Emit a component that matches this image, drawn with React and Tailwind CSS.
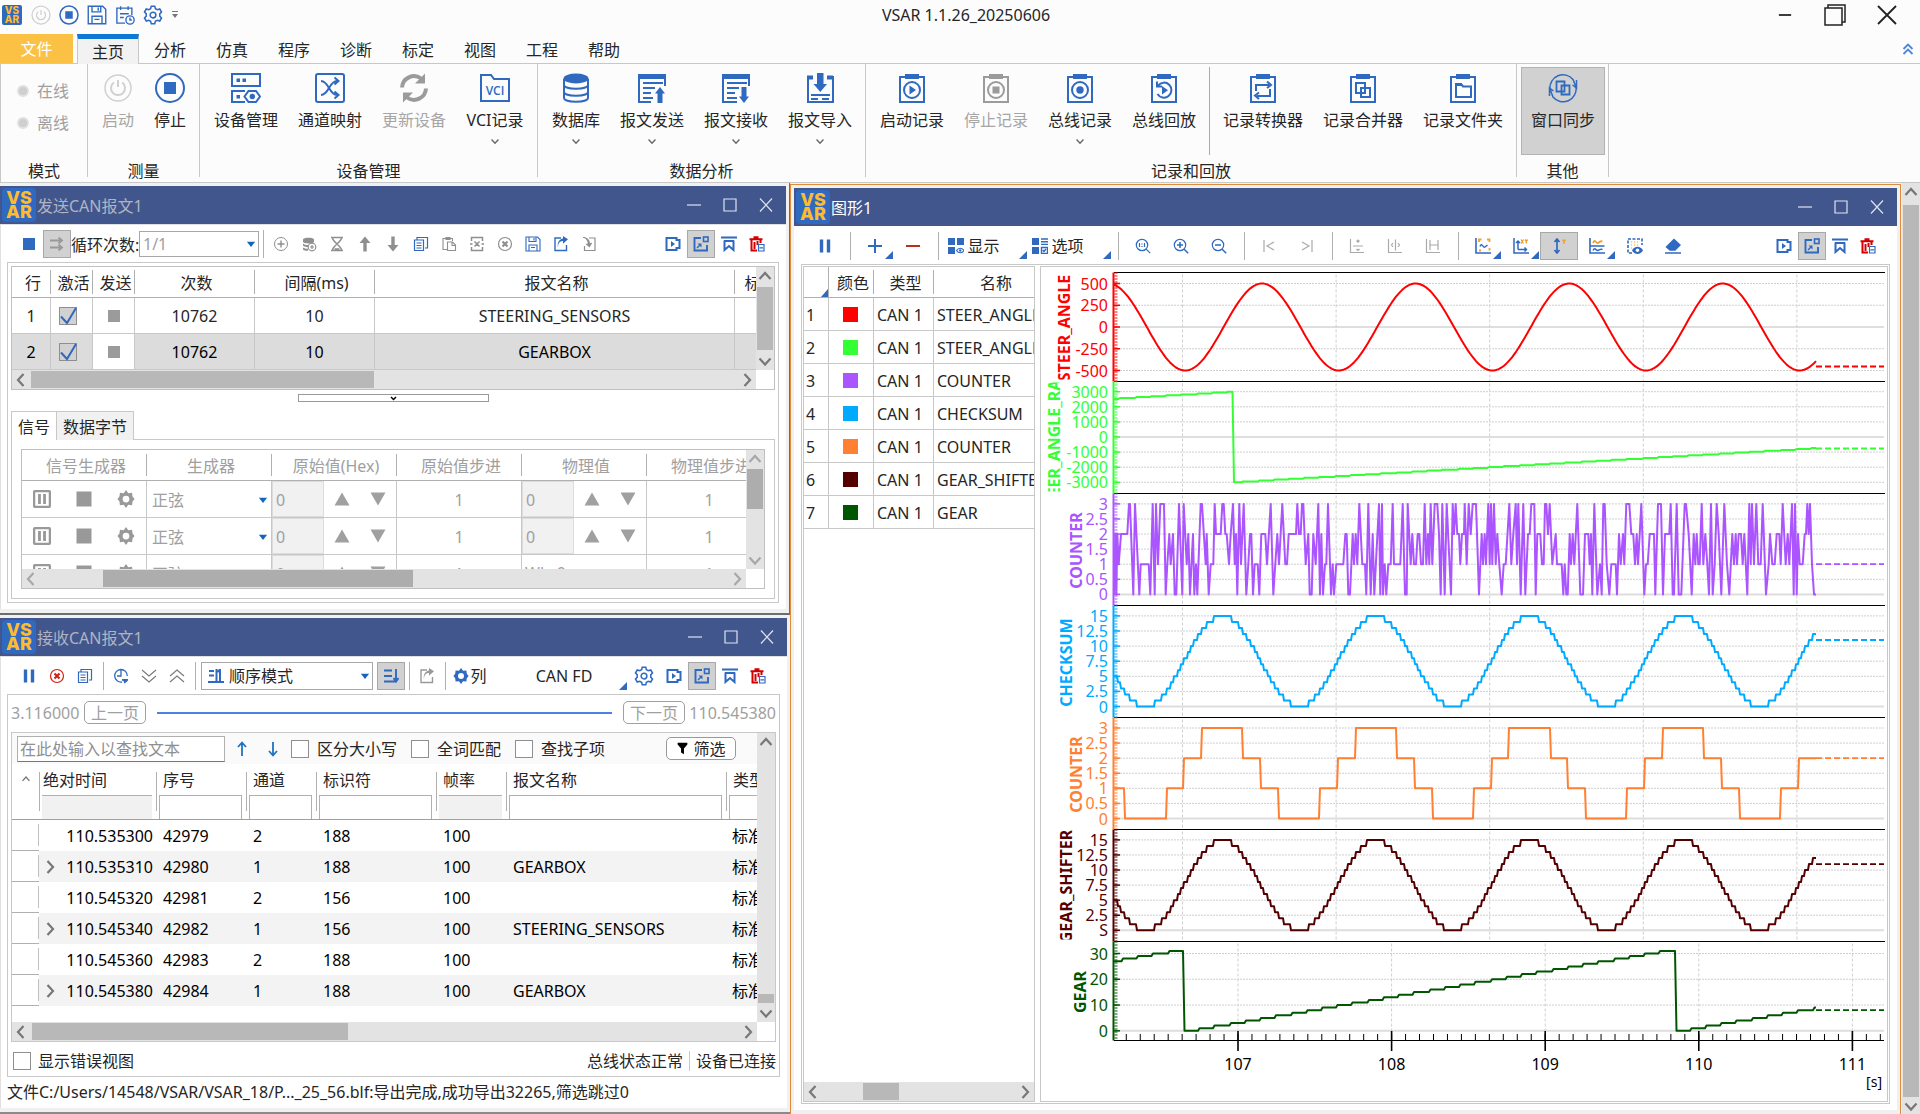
import { useState } from 'react';
import clsx from 'clsx';

/* ---------- icons ---------- */

function Icon({ name, size = 16, className }) {
  return (
    <svg
      viewBox="0 0 16 16"
      width={size}
      height={size}
      fill="none"
      stroke="currentColor"
      strokeWidth="1.2"
      className={clsx('shrink-0', className)}
      aria-hidden="true"
    >
      {ICONS[name]}
    </svg>
  );
}

const GEAR_PATH =
  'M6.6 1h2.8l.5 2 1.5.8 2-.6 1.4 2.4L13.400 7.100v1.800l1.400 1.500-1.400 2.400-2-.6-1.500.8-.5 2H6.600l-.5-2-1.500-.8-2 .6L1.200 10.400 2.600 8.900V7.100L1.200 5.600l1.400-2.400 2 .6 1.500-.8z';

const ICONS = {
  stop: <rect x="2" y="2" width="12" height="12" fill="currentColor" stroke="none" />,
  pause: <path d="M4.500 1.500v13M11.500 1.500v13" strokeWidth="3.400" />,
  power: (
    <g>
      <circle cx="8" cy="8" r="7.200" strokeWidth="1" />
      <path d="M8 4v4M5.600 5.400a3.600 3.600 0 1 0 4.800 0" strokeWidth="1" />
    </g>
  ),
  stopCircle: (
    <g>
      <circle cx="8" cy="8" r="7.200" />
      <rect x="5" y="5" width="6" height="6" fill="currentColor" stroke="none" />
    </g>
  ),
  save: (
    <g>
      <path d="M1 1h11.500L15 3.500V15H1zM4 1v4.500h7V1M4 15V9h8v6M9 2v2.500M6 11.500h4" strokeWidth="1.100" />
    </g>
  ),
  schedule: (
    <g strokeWidth="1.100">
      <path d="M8 14.500H1.500v-12h12V8M4.500 1v3M10.500 1v3M4 7h7M4 10h3" />
      <circle cx="12" cy="12" r="3.300" />
      <path d="M12 10v2h1.500" />
    </g>
  ),
  gear: (
    <g>
      <path d={GEAR_PATH} />
      <circle cx="8" cy="8" r="2.300" />
    </g>
  ),
  gearBold: (
    <path d="M8 0l2 2.800 3.400-.3.400 3.300L15.600 8l-1.800 2.200-.4 3.300-3.400-.3L8 16l-2-2.800-3.400.3-.4-3.300L.4 8l1.800-2.200.4-3.300 3.400.3zM8 5a3 3 0 1 0 0 6 3 3 0 1 0 0-6z" fill="currentColor" stroke="none" fillRule="evenodd" />
  ),
  arrows: <path d="M1 4.500h12M9.500 1.500l3.500 3-3.500 3M1 11.500h12M9.500 8.500l3.500 3-3.500 3" strokeWidth="1.800" />,
  plusCircle: (
    <g>
      <circle cx="8" cy="8" r="6.500" strokeWidth="1" />
      <path d="M8 4.500v7M4.500 8h7" strokeWidth="1.400" />
    </g>
  ),
  xCircle: (
    <g>
      <circle cx="8" cy="8" r="6.500" strokeWidth="1.200" />
      <path d="M5.500 5.500l5 5M10.500 5.500l-5 5" strokeWidth="2.200" />
    </g>
  ),
  dbAdd: (
    <g>
      <path d="M2 3.500C2 1.200 13 1.200 13 3.500v2.200C13 8 2 8 2 5.700zM2 7.500c1 1 3 1.500 5 1.500v2c-2 0-5-.6-5-1.500zM2 11.500c1 1 3 1.300 5 1.300v1.900c-2 0-5-.5-5-1.500z" fill="currentColor" stroke="none" />
      <circle cx="11" cy="11" r="3.800" />
      <path d="M11 9v4M9 11h4" />
    </g>
  ),
  hourglass: <path d="M2 1.500h12M2 14.500h12M3.500 2c0 3.500 9 8.500 9 12M12.500 2c0 3.500-9 8.500-9 12M5.500 13h5" strokeWidth="1.500" />,
  up: <path d="M8 .5L13.500 7H9.700v8.500H6.300V7H2.500z" fill="currentColor" stroke="none" />,
  down: <path d="M8 15.500L2.500 9h3.800V.5h3.400V9h3.800z" fill="currentColor" stroke="none" />,
  copy: <path d="M4 4V1.500h10.500V12H12M1.500 4h9v10.500h-9zM3.500 7h5M3.500 9.500h5M3.500 12h5" />,
  paste: <path d="M6 13.500H2v-11h9.500V5M5 1.500h4v2H5zM6.500 6h5l3 3v5.500h-8zM11 6v3.500h3.500" strokeWidth="1.100" />,
  cutX: <path d="M2.500 5V1.500h11V5M2.500 11v3.500h11V11M1 8h2.500M12.500 8H15M5.500 5.500l5 5M10.500 5.500l-5 5" strokeWidth="1.500" />,
  share: (
    <g>
      <path d="M8 2H2v12.500h11.500V9" strokeWidth="1.400" />
      <path d="M5 11.500C5 7 7 5 10 5V7.800l5-4.500L10 0v2.500C6.500 3 4 6.500 5 11.500z" fill="currentColor" stroke="none" />
    </g>
  ),
  importIn: (
    <g>
      <path d="M8 2h6v12.500H3.500V10" />
      <path d="M2 1c4 0 6.500 2.500 7 6l2.300-.3L8.500 11.500 4.500 8l2.300-.5C6.500 4.500 5 2 2 2z" fill="currentColor" stroke="none" />
    </g>
  ),
  boxPlay: (
    <g>
      <path d="M1.500 2h10v2h3v8h-3v2h-10z" strokeWidth="2" />
      <path d="M6 5v6l4-3z" fill="currentColor" stroke="none" />
    </g>
  ),
  popOut: (
    <g strokeWidth="1.900">
      <path d="M8 2H1.500v12.500H14V9" />
      <rect x="10.500" y="1" width="4.500" height="4.500" strokeWidth="1.600" />
      <path d="M4.500 7.500h4v4z" fill="currentColor" stroke="none" />
      <path d="M4 12l3.500-3.500" strokeWidth="1.500" />
    </g>
  ),
  bookmark: (
    <g strokeWidth="2">
      <path d="M0 1.500h16M3.500 4.500v9.500L8 10l4.500 4V4.500M3 5h10" />
    </g>
  ),
  trash: (
    <g>
      <path d="M.5 3.200h13M4.500 1.300h5M2.500 3v11.500H8M5.500 6v7M8.500 5v4M11.500 4v3" strokeWidth="2" />
      <path d="M9.500 8.500h5.500v6.500H9.500zM10.500 11.800h3.500" stroke="#2f69c0" fill="#fff" />
    </g>
  ),
  timer: (
    <g>
      <path d="M9 14A6.300 6.300 0 1 1 14.300 8M8 1.700V8H4" strokeWidth="1.300" />
      <path d="M9 11h6v1.500l-2 2-2 1v-2l-2-1z" fill="currentColor" stroke="none" />
    </g>
  ),
  dblDown: <path d="M1 2l7 6 7-6M1 8l7 6 7-6" strokeWidth="1.100" />,
  dblUp: <path d="M1 8l7-6 7 6M1 14l7-6 7 6" strokeWidth="1.100" />,
  rows: <path d="M1 2.500h8M1 8h8M1 13.500h12M13 1v11M10.500 10l2.500 3.500 2.500-3.500" strokeWidth="1.900" />,
  order: <path d="M1 3h5M1 7.500h5M0 14h16M8.500 1v12M12 1v12M9.500 4L12 1.500" strokeWidth="2" />,
  plus: <path d="M8 1v14M1 8h14" strokeWidth="2" />,
  minus: <path d="M1 8h14" strokeWidth="2" />,
  panelsEye: (
    <g fill="currentColor" stroke="none">
      <path d="M0 0h7v7H0zM9 0h7v7H9zM0 9h7v7H0z" />
      <path d="M8.500 12.500c2-3 5.500-3 7.500 0-2 3-5.500 3-7.500 0z" fill="none" stroke="currentColor" />
      <circle cx="12.200" cy="12.500" r="1.200" />
    </g>
  ),
  panelsCheck: (
    <g>
      <path d="M0 0h7v7H0zM0 9h7v7H0z" fill="currentColor" stroke="none" />
      <path d="M9 1h7M9 3.700h7M9 6.400h7M9.500 9.500h6V15.500h-6zM10.800 12l1.200 1.500 2-2.500" strokeWidth="1.400" />
    </g>
  ),
  zoomOne: (
    <g>
      <circle cx="7" cy="7" r="5.700" />
      <path d="M11.200 11.200l4 4M4.500 5v4M9.500 5v4M7 5.500v1M7 8v1" />
    </g>
  ),
  zoomIn: (
    <g>
      <circle cx="7" cy="7" r="5.700" />
      <path d="M11.200 11.200l4 4M4 7h6M7 4v6" strokeWidth="1.500" />
    </g>
  ),
  zoomOut: (
    <g>
      <circle cx="7" cy="7" r="5.700" />
      <path d="M11.200 11.200l4 4M4 7h6" strokeWidth="1.500" />
    </g>
  ),
  first: <path d="M3 2v12M13 4L6 8l7 4" />,
  last: <path d="M13 2v12M3 4l7 4-7 4" />,
  splitV: <path d="M1.500 1v13.500H15M4 8h10M9 2v3M7.500 3.500L9 2l1.500 1.500M9 11v2M7.500 11L9 12.500 10.500 11" />,
  splitH: <path d="M1.500 1v13.500H15M8.500 1.500v11M6 5L4.500 7 6 9M11 5l1.500 2L11 9" />,
  spanH: <path d="M1.500 1v13.500H15M5 2v10M13 2v10M5 7h8" />,
  wave: (
    <g>
      <path d="M1 0v15h15" strokeWidth="1.600" />
      <path d="M4 4V1.500h2.500M12 1.500h2.500V4M14.500 10v2.500M4 12.500h2" stroke="#f0a030" strokeWidth="1.800" />
      <path d="M5 8.500c2-5 3 2 5 .5l2.500-2" strokeWidth="1.500" />
    </g>
  ),
  axesXY: (
    <g>
      <path d="M1 0v15h15M5 11.500V3M3 5l2-2 2 2M5 11.500h8M11.500 9.500l2 2-2 2" strokeWidth="1.500" />
      <path d="M8 1.500l2.500 4M10.500 1.500l-2.500 4M12 1.500l1.300 2 1.300-2M13.300 3.500v2" stroke="#f0a030" strokeWidth="1.400" />
    </g>
  ),
  axisY: (
    <g>
      <path d="M6 1v14M3.500 4L6 1 8.500 4M3.500 12L6 15l2.500-3" strokeWidth="1.700" />
      <path d="M11.500 1.500l1.500 2 1.500-2M13 3.500v2.500" stroke="#f0a030" strokeWidth="1.500" />
    </g>
  ),
  waves: (
    <g>
      <path d="M1 0v15h15M1 8h14.500" strokeWidth="1.600" />
      <path d="M4 5c2-5 3 1 5 0s2-2.500 4.500-1.500" stroke="#f0a030" strokeWidth="1.800" />
      <path d="M4 12.500c2-4 3 .5 5 0s2-2 4.500-1" strokeWidth="1.500" />
    </g>
  ),
  gridEye: (
    <g>
      <path d="M5 15H1V1h14v6" strokeDasharray="3 1.500" strokeWidth="1.600" />
      <path d="M4 4h9M4 7h9M4 10h2" stroke="#f0a030" strokeDasharray="1.200 1.800" />
      <path d="M5 12.500c2.500-5 8.500-5 11 0-2.500 4.500-8.500 4.500-11 0z" fill="currentColor" stroke="none" />
      <circle cx="10.500" cy="12.200" r="1.700" fill="#fff" stroke="none" />
    </g>
  ),
  eraser: <path d="M9 1.500L15 7l-5 5H5L1.500 9zM0 15h16" fill="currentColor" strokeWidth="1.400" />,
  chevDown: <path d="M2.500 5.500L8 11.500l5.500-6" strokeWidth="2.200" />,
  chevUp: <path d="M2.500 11L8 5l5.500 6" strokeWidth="2.200" />,
  chevLeft: <path d="M10.500 2L5 8l5.500 6" strokeWidth="2.200" />,
  chevRight: <path d="M5.500 2L11 8l-5.500 6" strokeWidth="2.200" />,
  caret: <path d="M2.500 5h11L8 12z" fill="currentColor" stroke="none" />,
  triUp: <path d="M8 1.500l7.500 13H.5z" fill="currentColor" stroke="none" />,
  triDown: <path d="M8 14.500l7.500-13H.5z" fill="currentColor" stroke="none" />,
  cellPause: <path d="M1.500 0h13A1.500 1.500 0 0 1 16 1.500v13a1.500 1.500 0 0 1-1.500 1.500h-13A1.500 1.500 0 0 1 0 14.500v-13A1.500 1.500 0 0 1 1.500 0zM2 2v12h12V2zM4.500 3.500H7v9H4.500zM9 3.500h2.500v9H9z" fill="currentColor" stroke="none" fillRule="evenodd" />,
  arrowUpThin: <path d="M8 15V2M4 6l4-4.500L12 6" strokeWidth="1.800" />,
  arrowDownThin: <path d="M8 1v13M4 10l4 4.500 4-4.500" strokeWidth="1.800" />,
  funnel: <path d="M2 1h12v2L9.800 8v7L6.200 13V8L2 3z" fill="currentColor" stroke="none" />,
  winMin: <path d="M1 8h14" />,
  winMax: <path d="M2 2h12v12H2z" />,
  winClose: <path d="M2 1.500l12 13M14 1.500l-12 13" />,
};

/* 30x30 drawings used by the ribbon buttons */
const CLIP = (
  <g>
    <path d="M3 4h24v25H3z" strokeWidth="2" />
    <path d="M8 1h14v5H8z" fill="currentColor" stroke="none" />
  </g>
);

const RIBBON_ICONS = {
  power: (
    <g strokeWidth="1.500">
      <circle cx="15" cy="15" r="13" />
      <path d="M15 7v7M10.800 9.500a7 7 0 1 0 8.400 0" strokeWidth="2" />
    </g>
  ),
  stop: (
    <g>
      <circle cx="15" cy="15" r="14" strokeWidth="2" />
      <rect x="9" y="9" width="12" height="12" fill="currentColor" stroke="none" />
    </g>
  ),
  devices: (
    <g strokeWidth="2">
      <path d="M1 1h28v12H1zM14 29H1V18h13" />
      <path d="M5.500 5.500h3.500v3.500H5.500zM11.500 5.500h3.500v3.500h-3.500zM5.500 22h3.500v3.500H5.500z" fill="currentColor" stroke="none" />
      <path d="M17.500 18h7.500l4 5.500-4 5.500h-7.500l-4-5.500z" />
      <circle cx="21.300" cy="23.500" r="1.700" fill="currentColor" />
    </g>
  ),
  shuffle: (
    <g strokeWidth="2">
      <rect x="1" y="1" width="28" height="28" rx="2" />
      <path d="M6 8c8 0 8 14 16 14M6 22c8 0 8-14 16-14M19.500 4.500L23.500 8l-4 3.500M19.500 18.500l4 3.500-4 3.500" />
    </g>
  ),
  refresh: (
    <g strokeWidth="4">
      <path d="M3 14.500A12 12 0 0 1 22 5.500M27 15.500A12 12 0 0 1 8 24.500" />
      <path d="M26 .5v10H16zM4 29.500v-10h10z" fill="currentColor" stroke="none" />
    </g>
  ),
  vci: (
    <g strokeWidth="2">
      <path d="M1 28V2h10l3 4h15v22z" />
      <text x="15" y="22" textAnchor="middle" fontSize="12" fontWeight="600" fontFamily="Open Sans" fill="currentColor" stroke="none">VCI</text>
    </g>
  ),
  database: (
    <g>
      <ellipse cx="15" cy="5.500" rx="12.500" ry="5" fill="currentColor" stroke="none" />
      <path d="M3 6v19c0 5 24 5 24 0V6M3 12c0 5 24 5 24 0M3 19c0 5 24 5 24 0" strokeWidth="2" />
    </g>
  ),
  send: (
    <g strokeWidth="2">
      <path d="M14 29H2V2h26v11M6 10h20M6 15h12M6 20h8M6 25h10" />
      <path d="M2 1h26v5H2z" fill="currentColor" stroke="none" />
      <path d="M23 14l5 6.500h-2.500V30h-5v-9.500H18z" fill="currentColor" stroke="none" />
    </g>
  ),
  receive: (
    <g strokeWidth="2">
      <path d="M16 29H2V2h26v11M6 10h20M6 15h12M6 20h8M6 25h10" />
      <path d="M2 1h26v5H2z" fill="currentColor" stroke="none" />
      <path d="M23 30l-5-6.500h2.500V14h5v9.500H28z" fill="currentColor" stroke="none" />
    </g>
  ),
  importDoc: (
    <g strokeWidth="2">
      <path d="M8 4H3v25h25V4h-5M6 22h19M6 26h7M17 26h7" />
      <path d="M2 2.500h6v4H2zM22 2.500h6v4h-6z" fill="currentColor" stroke="none" />
      <path d="M12 0h6.500v11H22l-6.700 8L8.500 11H12z" fill="currentColor" stroke="none" />
    </g>
  ),
  recPlay: (
    <g>
      {CLIP}
      <circle cx="15" cy="17" r="8" strokeWidth="2" />
      <path d="M12.500 12.500v9l6.500-4.500z" fill="currentColor" stroke="none" />
    </g>
  ),
  recStop: (
    <g>
      {CLIP}
      <circle cx="15" cy="17" r="8" strokeWidth="2" />
      <path d="M11.500 13.500h7v7h-7z" fill="currentColor" stroke="none" />
    </g>
  ),
  recDot: (
    <g>
      {CLIP}
      <circle cx="15" cy="17" r="8" strokeWidth="2" />
      <circle cx="15" cy="17" r="3.700" fill="currentColor" stroke="none" />
    </g>
  ),
  replay: (
    <g>
      {CLIP}
      <path d="M9 12.500a7.500 7.500 0 1 1-.5 8.500M8 8.500v5h5" strokeWidth="2" />
      <path d="M13 13v8.500l6-4.200z" fill="currentColor" stroke="none" />
    </g>
  ),
  convert: (
    <g>
      {CLIP}
      <path d="M8 18v-6h13M22 16v7H9M19 8.500l4 3.500-4 3M11 26l-4-3.500 4-3" strokeWidth="2" />
    </g>
  ),
  merge: (
    <g>
      {CLIP}
      <path d="M8 10h9v10H8zM13 15h9v9h-9z" strokeWidth="2" />
    </g>
  ),
  folder: (
    <g>
      {CLIP}
      <path d="M8 24V11h5l2 2.500h8V24z" strokeWidth="2" />
      <path d="M7 10h6.500l2 3H7z" fill="currentColor" stroke="none" />
    </g>
  ),
  sync: (
    <g strokeWidth="2">
      <path d="M2 16A13 13 0 0 1 25 6.500L28 14M28 14A13 13 0 0 1 5 24L2 16M28.500 7v8l-4-3M1.500 23v-8l4 3" strokeWidth="1.500" />
      <path d="M8.500 8.500h8v10h-8zM13.500 12.500h8v9h-8z" strokeWidth="1.800" />
    </g>
  ),
};

function Logo({ small }) {
  return (
    <span
      className={clsx(
        'flex shrink-0 flex-col items-center justify-center bg-[#2f69c0] font-[Inter] font-extrabold text-[#fdbb2d]',
        small ? 'h-5 w-5 rounded-[2px] text-[10px] leading-[9px]' : 'h-[34px] w-[34px] rounded-[4px] text-[18px] leading-[14px]',
      )}
    >
      <span>VS</span>
      <span>AR</span>
    </span>
  );
}

/* ---------- ribbon ---------- */

const TABS = ['主页', '分析', '仿真', '程序', '诊断', '标定', '视图', '工程', '帮助'];

function RibbonButton({ icon, label, width = 'w-[84px]', menu, disabled, active }) {
  return (
    <button
      type="button"
      disabled={disabled}
      className={clsx(
        'flex h-[88px] flex-col items-center border pt-[5px]',
        width,
        active ? 'border-[#b3b3b3] bg-[#d1d1d1]' : 'border-transparent',
        disabled ? 'text-[#a6a6a6]' : 'text-[#262626]',
      )}
    >
      <svg
        viewBox="0 0 30 30"
        width="30"
        height="30"
        fill="none"
        stroke="currentColor"
        className={disabled ? (icon === 'power' ? 'text-[#d0d0d0]' : 'text-[#9b9b9b]') : 'text-[#2f69c0]'}
        aria-hidden="true"
      >
        {RIBBON_ICONS[icon]}
      </svg>
      <span className="mt-[5px] whitespace-nowrap leading-6">{label}</span>
      {menu && <Icon name="chevDown" size={10} className="mt-1 text-[#666]" />}
    </button>
  );
}

function RibbonGroup({ title, children }) {
  return (
    <div className="mb-[5px] flex flex-col border-r border-[#c8c8c8]">
      <div className="flex pt-[3px] pr-[3px] pl-1">{children}</div>
      <div className="mt-1 text-center leading-6">{title}</div>
    </div>
  );
}

function Header() {
  const [tab, setTab] = useState('主页');
  return (
    <header className="bg-[#fcfcfc]">
      <div className="flex h-[34px] items-center">
        <div className="flex flex-1 items-center pb-1 pl-[2px] text-[#2f69c0]">
          <Logo small />
          <div className="ml-[5px] flex items-center">
            {['power', 'stopCircle', 'save', 'schedule', 'gear'].map((n) => (
              <button key={n} type="button" aria-label={n} className="flex w-7 justify-center">
                <Icon name={n} size={20} className={n === 'power' ? 'text-[#cfcfcf]' : ''} />
              </button>
            ))}
            <button type="button" aria-label="more" className="ml-1 text-[#777]">
              <svg width="8" height="8" viewBox="0 0 8 8" fill="currentColor"><path d="M1 0h6v1H1zM1 3h6L4 7z" /></svg>
            </button>
          </div>
        </div>
        <h1 className="pb-1 pl-4 text-[#262626]">VSAR 1.1.26_20250606</h1>
        <div className="flex flex-1 items-center justify-end pr-[6px] pb-1 text-[#222]">
          <button type="button" aria-label="minimize" className="flex w-[50px] justify-center"><Icon name="winMin" size={14} className="[stroke-width:2]" /></button>
          <button type="button" aria-label="restore" className="flex w-[50px] justify-center">
            <svg width="22" height="22" viewBox="0 0 22 22" fill="none" stroke="currentColor" strokeWidth="1.500"><path d="M1 4h17v17H1zM4 4V1h17v17h-3" /></svg>
          </button>
          <button type="button" aria-label="close" className="flex w-[54px] justify-center">
            <svg width="20" height="20" viewBox="0 0 20 20" fill="none" stroke="currentColor" strokeWidth="1.800"><path d="M1 1l18 18M19 1L1 19" /></svg>
          </button>
        </div>
      </div>

      <nav className="flex h-[30px] items-stretch border-b border-[#c8c8c8]">
        <button type="button" className="mr-1 w-[73px] bg-[#fac145] pt-px text-white">文件</button>
        {TABS.map((t) => (
          <button
            key={t}
            type="button"
            onClick={() => setTab(t)}
            className={clsx(
              'w-[62px] text-[#262626]',
              t === tab ? '-mb-px border-x border-t-[5px] border-x-[#c8c8c8] border-t-[#0f78d4] bg-[#f2f2f2]' : 'pt-[2px]',
            )}
          >
            {t}
          </button>
        ))}
        <span className="flex flex-1 items-center justify-end pr-[6px] text-[#4f86d8]">
          <svg width="12" height="12" viewBox="0 0 12 12" fill="none" stroke="currentColor" strokeWidth="1.800" aria-hidden="true"><path d="M1.500 6L6 1.500 10.500 6M1.500 11L6 6.500l4.500 4.500" /></svg>
        </span>
      </nav>

      <div className="flex h-[119px] border-b border-l border-[#c8c8c8]">
        <div className="mb-[5px] flex w-[87px] flex-col border-r border-[#c8c8c8] text-[#a0a0a0]">
          <div className="flex h-[91px] shrink-0 flex-col gap-2 pt-[15px] pl-4">
            {['在线', '离线'].map((m) => (
              <label key={m} className="flex items-center gap-2 leading-6">
                <input type="radio" name="mode" disabled className="h-3 w-3 appearance-none rounded-full border-2 border-[#e0e0e0] bg-[#cfcfcf]" />
                {m}
              </label>
            ))}
          </div>
          <div className="mt-1 text-center leading-6 text-[#262626]">模式</div>
        </div>
        <RibbonGroup title="测量">
          <RibbonButton icon="power" label="启动" width="w-[52px]" disabled />
          <RibbonButton icon="stop" label="停止" width="w-[52px]" />
        </RibbonGroup>
        <RibbonGroup title="设备管理">
          <RibbonButton icon="devices" label="设备管理" />
          <RibbonButton icon="shuffle" label="通道映射" />
          <RibbonButton icon="refresh" label="更新设备" disabled />
          <RibbonButton icon="vci" label="VCI记录" width="w-[78px]" menu />
        </RibbonGroup>
        <RibbonGroup title="数据分析">
          <RibbonButton icon="database" label="数据库" width="w-[68px]" menu />
          <RibbonButton icon="send" label="报文发送" menu />
          <RibbonButton icon="receive" label="报文接收" menu />
          <RibbonButton icon="importDoc" label="报文导入" menu />
        </RibbonGroup>
        <RibbonGroup title="记录和回放">
          <RibbonButton icon="recPlay" label="启动记录" />
          <RibbonButton icon="recStop" label="停止记录" disabled />
          <RibbonButton icon="recDot" label="总线记录" menu />
          <RibbonButton icon="replay" label="总线回放" />
          <div className="mx-[3px] w-px bg-[#aaa]" />
          <RibbonButton icon="convert" label="记录转换器" width="w-[100px]" />
          <RibbonButton icon="merge" label="记录合并器" width="w-[100px]" />
          <RibbonButton icon="folder" label="记录文件夹" width="w-[100px]" />
        </RibbonGroup>
        <RibbonGroup title="其他">
          <RibbonButton icon="sync" label="窗口同步" active />
        </RibbonGroup>
      </div>
    </header>
  );
}

/* ---------- shared window parts ---------- */

function TitleBar({ title, active }) {
  return (
    <div className="flex h-[38px] items-center bg-[#42568e] pl-[2px]">
      <Logo />
      <h2 className={clsx('flex-1 pt-[2px] pl-px', active ? 'text-white' : 'text-[#b0b4c0]')}>{title}</h2>
      <div className="flex pr-[2px] text-[#dfe3ee]">
        {['winMin', 'winMax', 'winClose'].map((n) => (
          <button key={n} type="button" aria-label={n} className="flex w-9 justify-center">
            <Icon name={n} />
          </button>
        ))}
      </div>
    </div>
  );
}

function Tool({ icon, color = 'text-[#2f69c0]', active, corner, wide, children, className }) {
  return (
    <button
      type="button"
      aria-label={icon}
      className={clsx(
        'relative flex h-7 shrink-0 items-center justify-center border',
        wide ? 'w-[38px]' : !className && 'w-7',
        active ? 'border-[#a8a8a8] bg-[#d1d1d1]' : 'border-transparent',
        className,
      )}
    >
      <Icon name={icon} className={color} />
      {children}
      {corner && (
        <svg width="8" height="8" className="absolute right-0 bottom-0 text-[#2f69c0]" fill="currentColor"><path d="M8 0v8H0z" /></svg>
      )}
    </button>
  );
}

function Sep({ wide }) {
  return (
    <div className={clsx('flex shrink-0 justify-center', wide ? 'w-3' : 'w-2')}>
      <div className="h-7 w-px bg-[#b0b0b0]" />
    </div>
  );
}

function RightTools() {
  return (
    <div className="ml-auto flex pr-[15px]">
      <Tool icon="boxPlay" />
      <Tool icon="popOut" active />
      <Tool icon="bookmark" />
      <Tool icon="trash" color="text-[#d40000]" />
    </div>
  );
}

function HScroll({ start, width, faded }) {
  return (
    <div className={clsx('flex h-[19px] items-center bg-[#e3e3e3]', faded ? 'text-[#a8a8a8]' : 'text-[#777]')}>
      <Icon name="chevLeft" className="mx-px" />
      <div className="flex h-full flex-1 py-px">
        <div style={{ width: start }} />
        <div className={faded ? 'bg-[#adadad]' : 'bg-[#b8b8b8]'} style={{ width }} />
      </div>
      <Icon name="chevRight" className="mx-px" />
    </div>
  );
}

function VScroll({ start, height, faded }) {
  return (
    <div className={clsx('flex w-[18px] shrink-0 flex-col items-center bg-[#e3e3e3]', faded ? 'text-[#a8a8a8]' : 'text-[#777]')}>
      <Icon name="chevUp" className="my-px" />
      <div className="w-full flex-1 px-px">
        <div style={{ height: start }} />
        <div className={faded ? 'bg-[#adadad]' : 'bg-[#b8b8b8]'} style={{ height }} />
      </div>
      <Icon name="chevDown" className="my-px" />
    </div>
  );
}

/* ---------- send window ---------- */

const SEND_COLS = [
  ['行', 'w-[39px]'],
  ['激活', 'w-[42px]'],
  ['发送', 'w-[42px]'],
  ['次数', 'w-[120px]'],
  ['间隔(ms)', 'w-[120px]'],
  ['报文名称', 'w-[360px]'],
  ['标识符', 'w-[64px]'],
];

function CheckBox({ label, checked, className }) {
  return (
    <span className={clsx('relative flex h-[18px] w-[18px] shrink-0', className)}>
      <input
        type="checkbox"
        aria-label={label}
        defaultChecked={checked}
        className="h-[18px] w-[18px] appearance-none border border-[#8f8f8f] checked:bg-[#d1d1d1]"
      />
      {checked && (
        <svg viewBox="0 0 18 18" className="pointer-events-none absolute inset-0 text-[#2f69c0]" fill="none" stroke="currentColor" strokeWidth="2">
          <path d="M2 9.500l6 6.500L17 1" />
        </svg>
      )}
    </span>
  );
}

function SendTable() {
  const cell = 'border-r border-b border-[#c8c8c8] p-0';
  return (
    <div className="border border-[#c0c0c0]">
      <div className="flex">
        <div className="w-0 flex-1 overflow-hidden">
          <table className="w-[787px] table-fixed border-separate border-spacing-0 text-center">
            <thead>
              <tr className="h-[31px]">
                {SEND_COLS.map(([name, w]) => (
                  <th key={name} className={clsx('border-b border-[#b0b0b0] p-0 font-normal whitespace-nowrap', w)}>
                    <div className="h-6 border-r border-[#b0b0b0] pl-1 leading-[26px]">{name}</div>
                  </th>
                ))}
              </tr>
            </thead>
            <tbody>
              {['STEERING_SENSORS', 'GEARBOX'].map((name, i) => (
                <tr key={name} className={clsx('h-9', i === 1 && 'bg-[#dcdcdc] text-black')}>
                  <td className={cell}>{i + 1}</td>
                  <td className={clsx(cell, 'pl-2')}><CheckBox label={`激活 ${i + 1}`} checked /></td>
                  <td className={clsx(cell, 'bg-white')}><div className="mx-auto h-3 w-3 bg-[#9b9b9b]" /></td>
                  <td className={cell}>10762</td>
                  <td className={cell}>10</td>
                  <td className={cell}>{name}</td>
                  <td className={cell} />
                </tr>
              ))}
            </tbody>
          </table>
        </div>
        <VScroll start={2} height={63} />
      </div>
      <div className="pr-[18px]"><HScroll start={1} width={343} /></div>
    </div>
  );
}

const SIGNAL_COLS = ['信号生成器', '生成器', '原始值(Hex)', '原始值步进', '物理值', '物理值步进'];

function Spinner({ label }) {
  return (
    <div className="flex h-full items-center text-[#a0a0a0]">
      <input aria-label={label} disabled defaultValue="0" className="h-9 w-[52px] border border-[#dcdcdc] bg-[#f1f1f1] pt-[2px] pl-[3px]" />
      <button type="button" disabled aria-label="increase" className="flex w-9 justify-center"><Icon name="triUp" /></button>
      <button type="button" disabled aria-label="decrease" className="flex w-9 justify-center"><Icon name="triDown" /></button>
    </div>
  );
}

function SignalTable() {
  const cell = 'border-r border-b border-[#c8c8c8] p-0';
  return (
    <div className="border border-[#c0c0c0] text-[#a0a0a0]">
      <div className="flex h-[119px]">
        <div className="w-0 flex-1 overflow-hidden">
          <table className="w-[750px] table-fixed border-separate border-spacing-0">
            <thead>
              <tr className="h-[31px]">
                {SIGNAL_COLS.map((name) => (
                  <th key={name} className="w-[125px] border-b border-[#b0b0b0] p-0 font-normal whitespace-nowrap">
                    <div className="h-[22px] border-r border-[#b0b0b0] pl-1 leading-6">{name}</div>
                  </th>
                ))}
              </tr>
            </thead>
            <tbody>
              {[1, 2, 3].map((r) => (
                <tr key={r} className="h-[37px]">
                  <td className={cell}>
                    <div className="flex items-center justify-around">
                      <Icon name="cellPause" size={18} className="text-[#999]" />
                      <Icon name="stop" size={20} className="text-[#999]" />
                      <Icon name="gearBold" size={18} className="text-[#999]" />
                    </div>
                  </td>
                  <td className={clsx(cell, 'pt-[2px]')}>
                    <div className="relative">
                      <select aria-label={`生成器 ${r}`} disabled className="block w-full appearance-none bg-transparent pl-[5px] text-[#a0a0a0] opacity-100">
                        <option>正弦</option>
                      </select>
                      <Icon name="caret" size={12} className="absolute top-1 right-[2px] text-[#1565c0]" />
                    </div>
                  </td>
                  <td className={cell}><Spinner label={`原始值 ${r}`} /></td>
                  <td className={clsx(cell, 'pt-[2px] text-center')}>1</td>
                  <td className={cell}>{r < 3 ? <Spinner label={`物理值 ${r}`} /> : <div className="pl-[3px]">Wh_0</div>}</td>
                  <td className={clsx(cell, 'pt-[2px] text-center')}>1</td>
                </tr>
              ))}
            </tbody>
          </table>
        </div>
        <VScroll start={1} height={40} faded />
      </div>
      <div className="pr-[18px]"><HScroll start={63} width={310} faded /></div>
    </div>
  );
}

function SendWindow() {
  const gray = 'text-[#8f8f8f]';
  return (
    <section className="border-r border-b-2 border-[#6d6d6d] bg-[#f0f0f0] pt-[3px] pr-[3px] pb-1">
      <TitleBar title="发送CAN报文1" />
      <div className="border-t border-l border-[#e0e0e0] bg-white pr-[7px] pb-[6px] pl-[6px]">
        <div className="-mr-[7px] flex h-[37px] items-center pl-2">
          <Tool icon="stop" />
          <Tool icon="arrows" color="text-[#999]" active />
          <label htmlFor="loops" className="w-[68px] pt-[2px] whitespace-nowrap">循环次数:</label>
          <div className="relative w-[120px]">
            <select id="loops" className="block h-[26px] w-full appearance-none border border-[#a8a8a8] pl-[3px] leading-6 text-[#a0a0a0]">
              <option>1/1</option>
            </select>
            <Icon name="caret" size={12} className="absolute top-[7px] right-[2px] text-[#1565c0]" />
          </div>
          <Sep />
          <Tool icon="plusCircle" color={gray} />
          <Tool icon="dbAdd" color={gray} />
          <Tool icon="hourglass" color={gray} />
          <Tool icon="up" color={gray} />
          <Tool icon="down" color={gray} />
          <Tool icon="copy" />
          <Tool icon="paste" color={gray} />
          <Tool icon="cutX" color={gray} />
          <Tool icon="xCircle" color={gray} />
          <Tool icon="save" />
          <Tool icon="share" />
          <Tool icon="importIn" color={gray} />
          <RightTools />
        </div>
        <div className="border border-[#c8c8c8] p-[3px]">
          <SendTable />
          <button type="button" aria-label="collapse" className="mx-auto mt-1 flex h-2 w-[191px] items-center justify-center border border-[#999]">
            <svg width="7" height="5" fill="none" stroke="black" strokeWidth="1.500"><path d="M1 1l2.500 2.500L6 1" /></svg>
          </button>
          <div className="mt-[9px] flex h-[29px]">
            <button type="button" className="relative z-10 w-[46px] border border-b-0 border-[#c8c8c8] bg-white pt-[2px]">信号</button>
            <button type="button" className="w-[77px] border border-b-0 border-l-0 border-[#c8c8c8] bg-[#f1f1f1] pt-[2px]">数据字节</button>
          </div>
          <div className="-mt-px border border-[#c8c8c8] p-[9px]">
            <SignalTable />
          </div>
        </div>
      </div>
    </section>
  );
}

/* ---------- receive window ---------- */

const RX_COLS = [
  { name: '绝对时间', w: 'w-[117px]', locked: true },
  { name: '序号', w: 'w-[90px]' },
  { name: '通道', w: 'w-[70px]' },
  { name: '标识符', w: 'w-[120px]' },
  { name: '帧率', w: 'w-[70px]', locked: true },
  { name: '报文名称', w: 'w-[220px]' },
  { name: '类型', w: 'w-[70px]' },
];

const RX_ROWS = [
  ['110.535300', '42979', '2', '188', '100', ''],
  ['110.535310', '42980', '1', '188', '100', 'GEARBOX'],
  ['110.545320', '42981', '2', '156', '100', ''],
  ['110.545340', '42982', '1', '156', '100', 'STEERING_SENSORS'],
  ['110.545360', '42983', '2', '188', '100', ''],
  ['110.545380', '42984', '1', '188', '100', 'GEARBOX'],
];

function RxTable() {
  return (
    <table className="w-[784px] table-fixed border-separate border-spacing-0 whitespace-nowrap">
      <thead>
        <tr className="h-14">
          <th className="w-[27px] border-b border-[#a0a0a0] p-0 align-top">
            <Icon name="chevUp" size={10} className="mx-auto mt-[10px] text-[#777]" />
          </th>
          {RX_COLS.map((c, i) => (
            <th key={c.name} className={clsx('border-b border-[#a0a0a0] p-0 text-left font-normal', c.w)}>
              <div className="flex h-[55px]">
                <div className="mt-2 h-[39px] w-px bg-[#b0b0b0]" />
                <div className="flex min-w-0 flex-1 flex-col pr-1 pl-[2px]">
                  <div className={clsx('h-[31px] leading-8', i === 0 ? 'pl-px' : 'pl-1')}>{c.name}</div>
                  <input
                    aria-label={`${c.name} filter`}
                    disabled={c.locked}
                    className={clsx('h-6 w-full border border-b-0 border-[#b0b0b0]', c.locked && 'border-x-0 bg-[#f1f1f1]')}
                  />
                </div>
              </div>
            </th>
          ))}
        </tr>
      </thead>
      <tbody className="text-black">
        {RX_ROWS.map((row, i) => (
          <tr key={row[1]} className={clsx('h-[31px]', i % 2 === 1 && 'bg-[#f3f3f3]')}>
            <td className="border-b border-[#b0b0b0] bg-white p-0">
              <div className="h-[22px] border-r border-[#c0c0c0]" />
            </td>
            <td className="p-0">
              <div className="flex items-center pr-[3px] pl-[3px]">
                {i % 2 === 1 && <Icon name="chevRight" className="text-[#777]" />}
                <span className="ml-auto">{row[0]}</span>
              </div>
            </td>
            {row.slice(1).map((v, j) => (
              <td key={j} className="p-0 pl-[7px]">{v}</td>
            ))}
            <td className="p-0 pl-[6px]">标准帧</td>
          </tr>
        ))}
      </tbody>
    </table>
  );
}

function SearchOption({ id, label }) {
  return (
    <label className="mr-[14px] flex items-center gap-2 whitespace-nowrap">
      <input id={id} type="checkbox" className="h-[18px] w-[18px] appearance-none border border-[#8f8f8f] bg-white" />
      {label}
    </label>
  );
}

function ReceiveWindow() {
  return (
    <section className="border-b-2 border-[#8a8a8a] bg-[#f0f0f0] pt-[3px] pr-[3px] pb-1">
      <TitleBar title="接收CAN报文1" />
      <div className="border-t border-l border-[#e0e0e0] bg-white pr-[7px] pl-[6px]">
        <div className="-mr-[7px] flex h-[37px] items-center pl-2">
          <Tool icon="pause" />
          <Tool icon="xCircle" color="text-[#d42010]" />
          <Tool icon="copy" />
          <Sep />
          <Tool icon="timer" />
          <Tool icon="dblDown" color="text-[#777]" />
          <Tool icon="dblUp" color="text-[#777]" />
          <Sep />
          <div className="relative mx-[2px] w-[172px] text-[#262626]">
            <select aria-label="显示模式" className="block h-7 w-full appearance-none border border-[#a8a8a8] pl-[27px] leading-6">
              <option>顺序模式</option>
            </select>
            <Icon name="order" className="absolute top-[6px] left-[7px] text-[#2f69c0]" />
            <Icon name="caret" size={12} className="absolute top-2 right-[2px] text-[#1565c0]" />
          </div>
          <div className="ml-[2px]"><Tool icon="rows" active /></div>
          <Sep />
          <Tool icon="share" color="text-[#999]" />
          <Sep />
          <Tool icon="gearBold" className="ml-[3px] w-9 gap-[1px] whitespace-nowrap">列</Tool>
          <button type="button" className="relative ml-[13px] h-7 w-[126px] text-center">
            CAN FD
            <svg width="8" height="8" className="absolute right-0 bottom-0 text-[#2f69c0]" fill="currentColor"><path d="M8 0v8H0z" /></svg>
          </button>
          <div className="ml-auto">
            <button type="button" aria-label="settings" className="flex h-7 w-7 items-center justify-center"><Icon name="gear" size={20} className="text-[#2f69c0]" /></button>
          </div>
          <div className="ml-[2px]"><RightTools /></div>
        </div>

        <div className="border border-[#c8c8c8] px-[3px]">
          <div className="flex h-[37px] items-center pb-[2px] text-[#a0a0a0]">
            <span className="w-[73px]">3.116000</span>
            <button type="button" disabled className="h-[23px] w-[62px] rounded-[5px] border border-[#a0a0a0] leading-5">上一页</button>
            <div className="mx-[11px] h-[2px] flex-1 bg-[#4a80e8]" />
            <button type="button" disabled className="h-[23px] w-[62px] rounded-[5px] border border-[#a0a0a0] leading-5">下一页</button>
            <span className="w-[91px] text-right">110.545380</span>
          </div>
          <div className="border border-[#c8c8c8]">
            <div className="flex">
              <div className="w-0 flex-1 overflow-hidden">
                <div className="flex h-[31px] items-center bg-[#fafafa] pl-[5px]">
                  <input
                    aria-label="查找文本"
                    placeholder="在此处输入以查找文本"
                    className="h-[26px] w-[208px] border border-[#b0b0b0] border-b-[#777] bg-white px-[2px] placeholder:text-[#8f8f8f]"
                  />
                  <button type="button" aria-label="previous" className="flex w-[34px] justify-center text-[#1e73be]"><Icon name="arrowUpThin" /></button>
                  <button type="button" aria-label="next" className="mr-1 flex w-7 justify-center text-[#1e73be]"><Icon name="arrowDownThin" /></button>
                  <SearchOption id="case" label="区分大小写" />
                  <SearchOption id="word" label="全词匹配" />
                  <SearchOption id="sub" label="查找子项" />
                  <button type="button" className="mr-[21px] ml-auto flex h-[23px] w-[70px] items-center justify-center gap-1 rounded-[5px] border border-[#999] bg-white whitespace-nowrap">
                    <Icon name="funnel" size={13} className="text-black" />
                    筛选
                  </button>
                </div>
                <RxTable />
                <div className="h-4" />
              </div>
              <VScroll start={243} height={9} />
            </div>
            <div className="pr-[18px]"><HScroll start={2} width={316} /></div>
          </div>
          <div className="flex h-[34px] items-center pt-1">
            <label className="ml-[2px] flex items-center gap-[7px]">
              <input type="checkbox" className="h-[18px] w-[18px] appearance-none border border-[#8f8f8f]" />
              显示错误视图
            </label>
            <span className="ml-auto">总线状态正常</span>
            <span className="mx-[6px] h-5 w-px bg-[#c8c8c8]" />
            <span>设备已连接</span>
          </div>
        </div>
        <p className="h-[31px] leading-[30px] whitespace-nowrap">
          文件C:/Users/14548/VSAR/VSAR_18/P..._25_56.blf:导出完成,成功导出32265,筛选跳过0
        </p>
      </div>
    </section>
  );
}

/* ---------- chart ---------- */

const AXIS = 73;
const RIGHT = 843;
const LAST = 775;
const SECOND = 153.6;

const LANES = [
  { name: 'STEER_ANGLE', color: '#ff0000', top: 5.500, bottom: 114.500, nameX: 23, labels: ['500', '250', '0', '-250', '-500'], y0: 16.500, y1: 103.500, zero: 60, hold: 99.500 },
  { name: 'STEER_ANGLE_RATE', color: '#33ff33', top: 114.500, bottom: 226.500, nameX: 13, labels: ['3000', '2000', '1000', '0', '-1000', '-2000', '-3000'], y0: 124.700, y1: 215.300, zero: 170, hold: 181.500 },
  { name: 'COUNTER', color: '#aa55ff', top: 226.500, bottom: 338.500, nameX: 35, labels: ['3', '2.5', '2', '1.5', '1', '0.5', '0'], y0: 236.900, y1: 327.400, zero: 327.400, hold: 297.200 },
  { name: 'CHECKSUM', color: '#00aaff', top: 338.500, bottom: 450.500, nameX: 25, labels: ['15', '12.5', '10', '7.5', '5', '2.5', '0'], y0: 348.900, y1: 439.500, zero: 439.500, hold: 373 },
  { name: 'COUNTER', color: '#ff8033', top: 450.500, bottom: 562.500, nameX: 35, labels: ['3', '2.5', '2', '1.5', '1', '0.5', '0'], y0: 461, y1: 551.500, zero: 551.500, hold: 491.200 },
  { name: 'GEAR_SHIFTER', color: '#550000', top: 562.500, bottom: 674.500, nameX: 25, labels: ['15', '12.5', '10', '7.5', '5', '2.5', 'S'], y0: 572.900, y1: 663.300, zero: 663.300, hold: 597.200 },
  { name: 'GEAR', color: '#005500', top: 674.500, bottom: 773.500, nameX: 39, labels: ['30', '20', '10', '0'], y0: 686.500, y1: 763.800, zero: 763.800, hold: 743.200 },
];

// x/level pairs of the fast counter, in thirds of a pixel from each block's origin
const COUNTER_BLOCKS = [
  {
    origin: -11,
    pairs:
      '252:0 256:2 259:0 262:2 266:1 273:2 292:2 297:3 300:3 310:0 315:3 328:0 332:1 356:1 361:0 368:3 374:0 378:3 384:1 391:3 402:3 407:0 412:1 418:2 422:1 429:2 434:0 439:0 447:3 457:0 461:3 470:1 475:2 480:0 489:2 493:0 498:1 502:0 512:3 516:3 527:1 530:2 536:0 542:1 550:1 554:3 558:2 572:2 577:3 581:3 586:2 590:2 597:1 602:2 609:3 614:1 618:2 622:0 628:3 633:1 641:3 649:0 655:1 660:2 664:2 669:0 674:1 683:1 688:0 694:2 706:2 711:1 722:3 730:0 736:1 742:2 747:1 757:3 766:1 771:1 776:2 798:2 802:3 807:2 812:2 816:3 820:3 827:1 835:2 839:0 845:0 850:2 857:1 865:3 870:0 874:2 879:0 885:1 889:1 894:3 903:0 908:1 912:0 919:1 940:1 946:2 950:2 955:0 960:0 968:2 972:1 977:2 982:1 988:3 997:1 1005:1 1009:0 1015:3 1022:0 1028:2 1033:0 1047:3 1051:0 1056:3 1059:0 1064:1 1069:0 1075:1 1082:1 1088:3 1092:1 1111:1 1118:3 1125:0 1130:0 1133:3 1142:1 1147:2 1152:1 1158:1 1163:2 1168:2 1173:1 1179:1 1184:3 1189:1 1194:2 1198:1 1202:3 1207:1 1214:3 1222:3 1227:2 1232:0 1237:3 1244:0 1250:3',
  },
  {
    origin: 399,
    pairs:
      '33:0 38:3 42:2 47:3 52:2 57:2 61:1 66:2 72:2 74:3 80:1 86:3 92:2 98:3 108:3 117:0 125:2 129:1 134:2 138:1 145:3 149:1 153:3 157:1 162:3 167:1 172:2 178:1 185:0 191:1 197:1 208:3 214:1 220:2 227:3 231:1 235:3 242:0 250:3 256:0 264:2 269:2 274:3 283:3 287:0 292:2 301:2 306:1 311:1 315:3 319:3 324:2 329:3 337:1 347:2 351:1 365:1 370:0 374:1 379:0 383:0 389:2 393:1 398:2 403:1 412:3 421:0 429:0 435:2 445:2 449:1 453:2 457:0 463:3 472:0 480:1 485:0 490:3 494:3 500:1 508:0 514:1 527:1 531:0 537:2 542:1 549:2 553:1 559:3 568:3 574:2 580:2 585:1 590:2 594:1 599:2 604:3 613:0 618:1 623:1 629:2 642:2 646:0 654:3 663:3 669:0 675:2 688:2 692:3 698:0 702:0 710:3 716:0 724:0 734:3 738:3 746:2 755:0 761:2 766:1 770:2 775:1 779:1 785:3 790:1 796:2 802:1 807:0 813:3 818:0 824:1 830:3 836:2 844:0 853:3 861:1 868:0 877:2 882:1 887:2 891:1 896:2 903:2 908:1 913:2 922:0 928:3 932:1 936:3 942:1 949:3 955:1 962:1 968:3 978:0 986:1 990:2 997:1 1004:1 1010:2 1018:2 1022:1 1028:3 1037:1 1043:2 1048:1 1056:3 1061:0 1065:3 1070:0 1074:2 1079:1 1088:1 1094:2 1098:2 1102:3 1106:2 1110:3 1116:1 1122:0 1128:0',
  },
];

function sample(step, fn) {
  const pts = [];
  for (let x = AXIS; x < LAST; x += step) pts.push(`${x.toFixed(1)},${fn(x).toFixed(1)}`);
  pts.push(`${LAST},${fn(LAST).toFixed(1)}`);
  return pts.join(' ');
}

const cosAt = (x, peak) => Math.cos((2 * Math.PI * (x - peak)) / SECOND);

function stepped(lane, max) {
  const { y0, y1 } = LANES[lane];
  return sample(1, (x) => y1 - (Math.round((max / 2) * (1 + cosAt(x, 181.300))) / max) * (y1 - y0));
}

function counterPoints() {
  const { y0, y1 } = LANES[2];
  return COUNTER_BLOCKS.flatMap(({ origin, pairs }) =>
    pairs.split(' ').map((p) => {
      const [x, level] = p.split(':').map(Number);
      return `${(x / 3 + origin).toFixed(1)},${(y1 - (level / 3) * (y1 - y0)).toFixed(1)}`;
    }),
  ).join(' ');
}

const SERIES = [
  sample(2, (x) => 60 - 43.500 * cosAt(x, 221)),
  sample(1.500, (x) => {
    const n = Math.round((x - 194) / 15.360);
    return x < 193 ? 124.700 - n * 0.900 : 215.300 - n * 0.900;
  }),
  counterPoints(),
  stepped(3, 15),
  stepped(4, 3),
  stepped(5, 15),
  sample(1.500, (x) => {
    const n = Math.floor((x - 142.500) / 15.360);
    return 763.800 - ((n + 32) % 32) * 2.577;
  }),
];

function Lane({ lane, points, last }) {
  const { name, color, top, bottom, nameX, labels, y0, y1, zero, hold } = lane;
  const gap = (y1 - y0) / (labels.length - 1);
  const mid = (top + bottom) / 2;
  const firstGrid = last ? 197 : 141.500;
  return (
    <g>
      {labels.map((l, i) => (
        <line key={l} x1={AXIS} x2={RIGHT} y1={y0 + i * gap} y2={y0 + i * gap} stroke="#cfcfcf" strokeDasharray="2 1" />
      ))}
      <line x1={AXIS} x2={RIGHT} y1={zero} y2={zero} stroke="#dedede" strokeWidth="2" />
      {[0, 1, 2, 3, 4].map((i) => (
        <line key={i} x1={firstGrid + i * SECOND} x2={firstGrid + i * SECOND} y1={top + 2} y2={bottom} stroke="#cfcfcf" strokeDasharray="3 2" />
      ))}
      <line x1={AXIS} x2={RIGHT + 1} y1={top} y2={top} stroke="#000" />

      <line x1={AXIS - 0.500} x2={AXIS - 0.500} y1={top} y2={bottom} stroke={color} strokeWidth="2" />
      <line x1={AXIS + 2} x2={AXIS + 2} y1={top} y2={bottom} stroke={color} strokeWidth="3" strokeDasharray="1 2" />
      {labels.map((l, i) => (
        <g key={l}>
          <line x1={AXIS} x2={AXIS + 6} y1={y0 + i * gap} y2={y0 + i * gap} stroke={color} strokeWidth="1.500" />
          <text x="67" y={y0 + i * gap + 6} textAnchor="end" fill={color}>{l}</text>
        </g>
      ))}
      <svg x="0" y={top + 1} width="60" height={bottom - top - 3} overflow="hidden">
        <text
          transform={`translate(${nameX + 6} ${mid - top}) rotate(-90)`}
          textAnchor="middle"
          fontWeight="700"
          fill={color}
        >
          {name}
        </text>
      </svg>

      <polyline points={points} fill="none" stroke={color} strokeWidth="2" strokeLinejoin="round" />
      <line x1={LAST} x2={RIGHT} y1={hold} y2={hold} stroke={color} strokeWidth="1.800" strokeDasharray="6 3" />
    </g>
  );
}

function Chart() {
  const minor = SECOND / 11;
  const ticks = [];
  for (let x = 197 - 8 * minor; x < RIGHT; x += minor) ticks.push(x);
  return (
    <svg viewBox="0 0 846 834" className="block h-auto w-full text-base" fontFamily="Noto Sans, sans-serif" role="img" aria-label="图形1">
      {LANES.map((lane, i) => (
        <Lane key={i} lane={lane} points={SERIES[i]} last={i === 6} />
      ))}
      <line x1={AXIS} x2={RIGHT} y1="773.500" y2="773.500" stroke="#000" />
      {ticks.map((x) => (
        <line key={x} x1={x} x2={x} y1="767" y2="773" stroke="#000" />
      ))}
      {[107, 108, 109, 110, 111].map((s, i) => (
        <g key={s}>
          <line x1={197 + i * SECOND} x2={197 + i * SECOND} y1="764" y2="784" stroke="#000" strokeWidth="1.600" />
          <text x={197 + i * SECOND} y="803" textAnchor="middle">{s}</text>
        </g>
      ))}
      <text x="841" y="820" textAnchor="end" fontSize="14">[s]</text>
    </svg>
  );
}

/* ---------- graph window ---------- */

const SIGNALS = [
  ['STEER_ANGLE', 'bg-[#ff0000]'],
  ['STEER_ANGLE_RATE', 'bg-[#33ff33]'],
  ['COUNTER', 'bg-[#aa55ff]'],
  ['CHECKSUM', 'bg-[#00aaff]'],
  ['COUNTER', 'bg-[#ff8033]'],
  ['GEAR_SHIFTER', 'bg-[#550000]'],
  ['GEAR', 'bg-[#005500]'],
];

function GraphWindow() {
  const gray = 'text-[#aaa]';
  const cell = 'border-r border-b border-[#c8c8c8] p-0';
  return (
    <section className="mt-px mr-px min-w-0 flex-1 border border-[#e08a3c] bg-[#f0f0f0] p-[3px]">
      <TitleBar title="图形1" active />
      <div className="bg-white px-[7px] pb-[6px]">
        <div className="-mr-[7px] flex h-[38px] items-center pt-px pl-[5px]">
          <Tool icon="pause" wide />
          <Sep wide />
          <Tool icon="plus" wide corner />
          <Tool icon="minus" wide color="text-[#b83020]" />
          <Sep wide />
          <Tool icon="panelsEye" corner className="w-[84px] gap-[3px] pr-6 whitespace-nowrap">显示</Tool>
          <Tool icon="panelsCheck" corner className="w-[84px] gap-[3px] pr-6 whitespace-nowrap">选项</Tool>
          <Sep wide />
          <Tool icon="zoomOne" wide />
          <Tool icon="zoomIn" wide />
          <Tool icon="zoomOut" wide />
          <Sep wide />
          <Tool icon="first" wide color={gray} />
          <Tool icon="last" wide color={gray} />
          <Sep wide />
          <Tool icon="splitV" wide color={gray} />
          <Tool icon="splitH" wide color={gray} />
          <Tool icon="spanH" wide color={gray} />
          <Sep wide />
          <Tool icon="wave" wide corner />
          <Tool icon="axesXY" wide corner />
          <Tool icon="axisY" wide active />
          <Tool icon="waves" wide corner />
          <Tool icon="gridEye" wide />
          <Tool icon="eraser" wide />
          <RightTools />
        </div>

        <div className="flex border border-[#c8c8c8] p-px">
          <div className="flex w-[232px] shrink-0 flex-col border border-[#c8c8c8]">
            <div className="flex-1 overflow-hidden">
              <table className="w-[300px] table-fixed border-separate border-spacing-0 whitespace-nowrap">
                <thead>
                  <tr className="h-[31px]">
                    <th className="relative w-[25px] border-r border-b border-[#b0b0b0] p-0">
                      <svg width="7" height="8" className="absolute right-0 bottom-0 text-[#2f69c0]" fill="currentColor"><path d="M7 0v8H0z" /></svg>
                    </th>
                    <th className="w-[45px] border-b border-[#b0b0b0] p-0 font-normal"><div className="h-6 border-r border-[#b0b0b0] pl-1 leading-[26px]">颜色</div></th>
                    <th className="w-[60px] border-b border-[#b0b0b0] p-0 font-normal"><div className="h-6 border-r border-[#b0b0b0] pl-1 leading-[26px]">类型</div></th>
                    <th className="border-b border-[#b0b0b0] p-0 pt-[2px] pl-[46px] text-left font-normal">名称</th>
                  </tr>
                </thead>
                <tbody>
                  {SIGNALS.map(([name, color], i) => (
                    <tr key={i} className="h-[33px]">
                      <td className={clsx(cell, 'pt-[2px] pl-[2px]')}>{i + 1}</td>
                      <td className={cell}><div className={clsx('mr-auto ml-[14px] h-[15px] w-[15px]', color)} /></td>
                      <td className={clsx(cell, 'pt-[2px] pl-[3px]')}>CAN 1</td>
                      <td className={clsx(cell, 'pt-[2px] pl-[3px]')}>{name}</td>
                    </tr>
                  ))}
                </tbody>
              </table>
            </div>
            <HScroll start={41} width={36} />
          </div>
          <div className="ml-[5px] min-w-0 flex-1 border border-[#c8c8c8]">
            <Chart />
          </div>
        </div>
      </div>
    </section>
  );
}

export default function App() {
  return (
    <div className="flex min-h-screen flex-col bg-[#f0f0f0] font-['Noto_Sans','Noto_Sans_CJK_SC',sans-serif] text-base leading-5 text-[#262626]">
      <Header />
      <main className="flex flex-1">
        <div className="w-[790px] shrink-0">
          <SendWindow />
          <ReceiveWindow />
        </div>
        <GraphWindow />
        <VScroll start={4} height={892} />
      </main>
    </div>
  );
}
